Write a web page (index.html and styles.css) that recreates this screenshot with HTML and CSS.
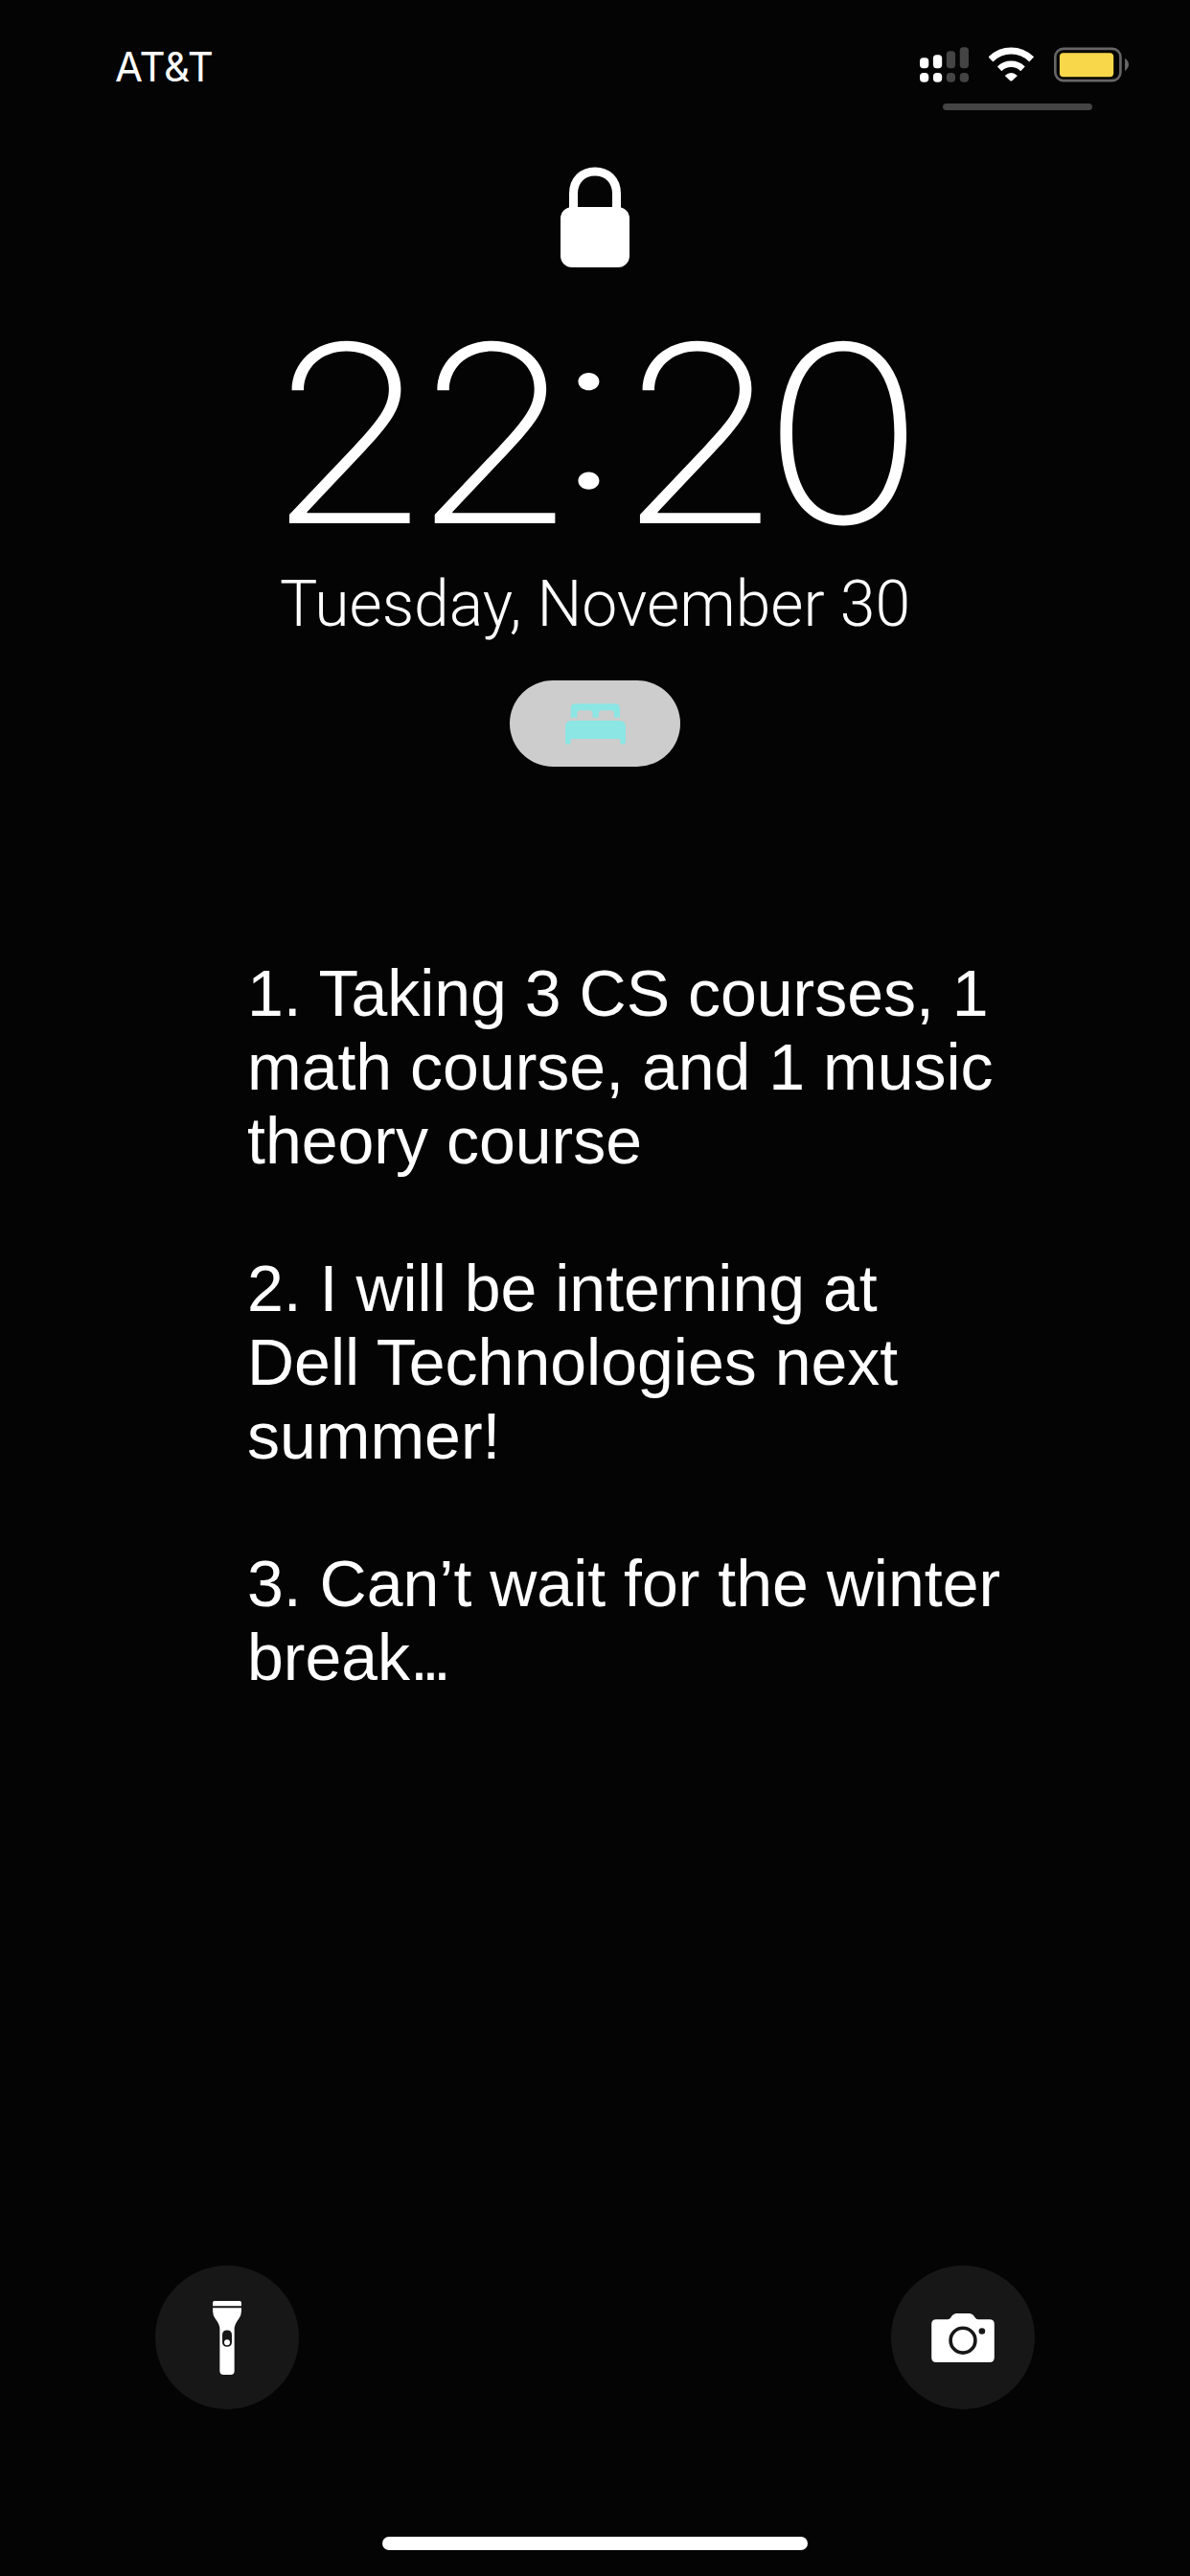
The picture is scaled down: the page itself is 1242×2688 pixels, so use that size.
FILE: index.html
```html
<!doctype html>
<html>
<head>
    <meta charset="utf-8">
    <title>Lock screen</title>
    <link rel="stylesheet" href="styles.css">
</head>
<body>
<div class="screen">

    <div class="status">
        <span class="carrier">AT&amp;T</span>
        <div class="status-right">
            <div class="status-icons">
                <svg class="signal" width="51" height="37" viewBox="117 87 154 110">
                    <rect x="117" y="120" width="28" height="33" rx="11" fill="#fff"/>
                    <rect x="159" y="111" width="28" height="42" rx="11" fill="#fff"/>
                    <rect x="201" y="99" width="28" height="54" rx="11" fill="#444"/>
                    <rect x="243" y="87" width="28" height="66" rx="11" fill="#444"/>
                    <rect x="117" y="168" width="28" height="29" rx="12" fill="#fff"/>
                    <rect x="159" y="168" width="28" height="29" rx="12" fill="#fff"/>
                    <rect x="201" y="168" width="28" height="29" rx="12" fill="#444"/>
                    <rect x="243" y="168" width="28" height="29" rx="12" fill="#444"/>
                </svg>
                <svg class="wifi" width="47" height="36" viewBox="335 88 143 107">
                    <path d="M341 126C378 90 434 90 471 126" fill="none" stroke="#fff" stroke-width="21"/>
                    <path d="M369 156C390 136 422 136 443 156" fill="none" stroke="#fff" stroke-width="20"/>
                    <path d="M386 178Q406 160 426 178L410 193Q406 197 402 193Z" fill="#fff"/>
                </svg>
                <svg class="battery" width="78" height="37" viewBox="537 88 237 109">
                    <rect x="541" y="92" width="207" height="101" rx="26" fill="none" stroke="#666" stroke-width="8"/>
                    <rect x="555" y="105" width="171" height="76" rx="12" fill="#f8d84a"/>
                    <path d="M762 122Q774 130 774 142Q774 154 762 162Z" fill="#666"/>
                </svg>
            </div>
            <div class="status-line"></div>
        </div>
    </div>

    <div class="lock-block">
        <svg class="lock" width="72" height="105" viewBox="0 0 72 105">
            <path d="M13.500 46V28C13.500 14 23 5 36 5C49 5 58.500 14 58.500 28V46" fill="none" stroke="#fff" stroke-width="9"/>
            <rect x="0" y="42" width="72" height="63" rx="12" fill="#fff"/>
        </svg>
        <div class="clock">22<span class="colon">:</span>20</div>
        <div class="date">Tuesday, November 30</div>
        <div class="focus-pill">
            <svg width="63" height="43" viewBox="178 165 188 127">
                <path d="M195 208V181Q195 165 211 165H332Q348 165 348 181V208H330V196Q330 186 320 186H292Q282 186 282 196V208H263V196Q263 186 253 186H225Q215 186 215 196V208Z" fill="#8be6e4"/>
                <path d="M178 238Q178 218 198 218H346Q366 218 366 238V284Q366 292 358 292H357Q349 292 349 284V275H195V284Q195 292 187 292H186Q178 292 178 284Z" fill="#8be6e4"/>
            </svg>
        </div>
    </div>

    <div class="note">
        <p>1. Taking 3 CS courses, 1 math course, and 1 music theory course</p>
        <p>2. I will be interning at<br>Dell Technologies next summer!</p>
        <p><span class="line">3. Can’t wait for the winter</span><span class="line">break<span class="dots">...</span></span></p>
    </div>

    <div class="quick-actions">
        <div class="round-btn">
            <svg width="30" height="77" viewBox="216 158 90 232">
                <path d="M216 174V163Q216 158 221 158H301Q306 158 306 163V174Z" fill="#fff"/>
                <path fill-rule="evenodd" d="M216 180H306V190Q306 204 298 214Q284 232 284 246V378Q284 390 272 390H250Q238 390 238 378V246Q238 232 224 214Q216 204 216 190ZM246 265V287Q246 302 261 302Q276 302 276 287V265Q276 250 261 250Q246 250 246 265Z" fill="#fff"/>
                <circle cx="261" cy="288" r="9" fill="#fff"/>
            </svg>
        </div>
        <div class="round-btn">
            <svg width="66" height="51" viewBox="156 186 198 154">
                <path fill-rule="evenodd" d="M171 205H207Q213 205 218 197Q225 186 236 186H274Q285 186 292 197Q297 205 303 205H339Q354 205 354 220V325Q354 340 339 340H171Q156 340 156 325V220Q156 205 171 205Z" fill="#fff"/>
                <circle cx="255" cy="271" r="39" fill="none" stroke="#171717" stroke-width="11"/>
                <circle cx="315" cy="242" r="10" fill="#171717"/>
            </svg>
        </div>
    </div>

    <div class="home-bar"></div>
</div>
</body>
</html>
```

FILE: styles.css
```css
html, body { margin: 0; padding: 0; background: #040404; }
body { font-family: "Liberation Sans", Arial, sans-serif; color: #fff; }
svg { display: block; }

.screen {
    width: 1242px; height: 2688px;
    display: flex; flex-direction: column;
    overflow: hidden;
}

.status {
    display: flex; justify-content: space-between; align-items: flex-start;
    padding: 49px 64px 0 120px;
    height: 125px; box-sizing: border-box;
}
.carrier { font-family: Inter, sans-serif; font-size: 42px; line-height: 42px; font-weight: 400; }
.status-right { display: flex; flex-direction: column; align-items: flex-end; }
.status-icons { display: flex; align-items: flex-start; gap: 21px; }
.status-line {
    width: 156px; height: 7px;
    margin: 22px 38px 0 0;
    background: #444; border-radius: 4px;
}

.lock-block { display: flex; flex-direction: column; align-items: center; padding-top: 49px; }
.clock {
    font-family: Inter, sans-serif; font-weight: 200;
    font-size: 258px; line-height: 258px;
    letter-spacing: -20px;
    margin: 44px 21px 0 0;
    transform: scaleX(1.09);
}
.colon {
    display: inline-block;
    margin: 0 11px 0 -5px;
    transform: translateY(-27px) scaleY(0.9);
}
.date { font-family: Roboto, sans-serif; font-weight: 300; font-size: 66px; line-height: 76px; margin-top: 12px; }
.focus-pill {
    width: 178px; height: 90px; margin-top: 41px;
    background: #cdcdcd; border-radius: 45px;
    display: flex; align-items: center; justify-content: center;
}

.note { padding: 198px 170px 0 258px; font-size: 68px; line-height: 77px; }
.note p { margin: 0 0 77px; }
.line { display: block; }
.dots { letter-spacing: -7px; }

.quick-actions {
    margin-top: auto;
    display: flex; justify-content: space-between;
    padding: 0 162px;
}
.round-btn {
    width: 150px; height: 150px; border-radius: 50%;
    background: #171717;
    display: flex; align-items: center; justify-content: center;
}

.home-bar {
    width: 444px; height: 14px;
    margin: 133px auto 27px;
    background: #fff; border-radius: 7px;
}
```
